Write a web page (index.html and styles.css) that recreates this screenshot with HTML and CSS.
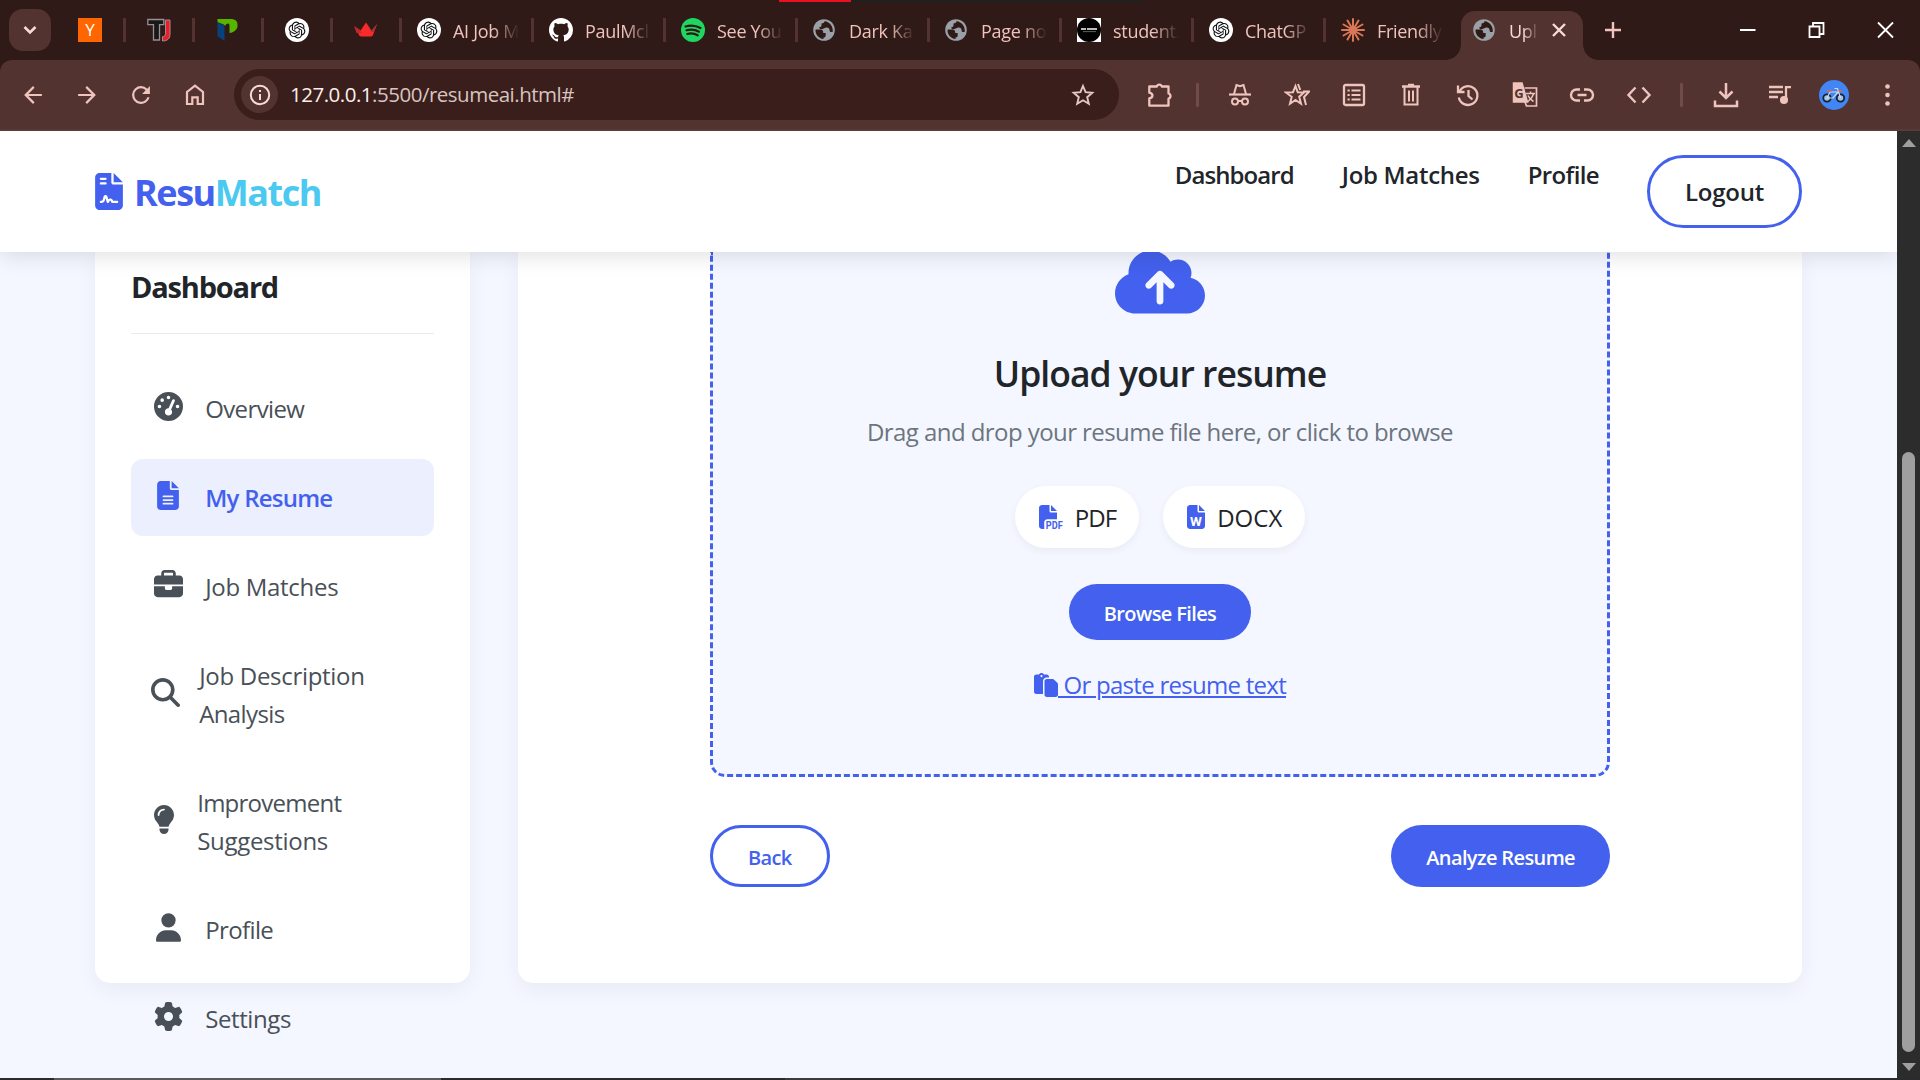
FILE: index.html
```html
<!DOCTYPE html>
<html lang="en">
<head>
<meta charset="utf-8">
<title>Upload Resume</title>
<link rel="stylesheet" href="styles.css">
</head>
<body>
<svg class="defs" width="0" height="0">
  <symbol id="i-openai" viewBox="0 0 24 24"><circle cx="12" cy="12" r="12" fill="#fff"/><path transform="translate(3.6 3.6) scale(.7)" fill="#111" d="M22.2819 9.8211a5.9847 5.9847 0 0 0-.5157-4.9108 6.0462 6.0462 0 0 0-6.5098-2.9A6.0651 6.0651 0 0 0 4.9807 4.1818a5.9847 5.9847 0 0 0-3.9977 2.9 6.0462 6.0462 0 0 0 .7427 7.0966 5.98 5.98 0 0 0 .511 4.9107 6.051 6.051 0 0 0 6.5146 2.9001A5.9847 5.9847 0 0 0 13.2599 24a6.0557 6.0557 0 0 0 5.7718-4.2058 5.9894 5.9894 0 0 0 3.9977-2.9001 6.0557 6.0557 0 0 0-.7475-7.0729zm-9.022 12.6081a4.4755 4.4755 0 0 1-2.8764-1.0408l.1419-.0804 4.7783-2.7582a.7948.7948 0 0 0 .3927-.6813v-6.7369l2.02 1.1686a.071.071 0 0 1 .038.052v5.5826a4.504 4.504 0 0 1-4.4945 4.4944zm-9.6607-4.1254a4.4708 4.4708 0 0 1-.5346-3.0137l.142.0852 4.783 2.7582a.7712.7712 0 0 0 .7806 0l5.8428-3.3685v2.3324a.0804.0804 0 0 1-.0332.0615L9.74 19.9502a4.4992 4.4992 0 0 1-6.1408-1.6464zM2.3408 7.8956a4.485 4.485 0 0 1 2.3655-1.9728V11.6a.7664.7664 0 0 0 .3879.6765l5.8144 3.3543-2.0201 1.1685a.0757.0757 0 0 1-.071 0l-4.8303-2.7865A4.504 4.504 0 0 1 2.3408 7.872zm16.5963 3.8558L13.1038 8.364 15.1192 7.2a.0757.0757 0 0 1 .071 0l4.8303 2.7913a4.4944 4.4944 0 0 1-.6765 8.1042v-5.6772a.79.79 0 0 0-.407-.667zm2.0107-3.0231l-.142-.0852-4.7735-2.7818a.7759.7759 0 0 0-.7854 0L9.409 9.2297V6.8974a.0662.0662 0 0 1 .0284-.0615l4.8303-2.7866a4.4992 4.4992 0 0 1 6.6802 4.66zM8.3065 12.863l-2.02-1.1638a.0804.0804 0 0 1-.038-.0567V6.0742a4.4992 4.4992 0 0 1 7.3757-3.4537l-.142.0805L8.704 5.459a.7948.7948 0 0 0-.3927.6813zm1.0976-2.3654l2.602-1.4998 2.6069 1.4998v2.9994l-2.5974 1.4997-2.6067-1.4997Z"/></symbol>
  <symbol id="i-globe" viewBox="0 0 24 24"><circle cx="11" cy="12" r="10.800" fill="#9aa0a6"/><g fill="#301a17"><path d="M2.600 11.500h4.800c1.700 0 2.800 1.100 2.800 2.700v.8h2.500v2.400c0 1.200-1 2-2.200 2.200v1.400C5.800 20.500 2 16.500 2.600 11.500z"/><path d="M11.500 3.200c-.2 1.900-1.500 2-3 2.300v1.800c0 1.400-.900 1.900-2.300 1.900.2 1.400 1 2 2.500 2 2.300 0 2.800-1.600 5-1.600 1.900 0 2.900 1.200 2.900 2.900 0 1.100.7 1.600 1.800 1.600h1.300c.9-5-2.700-10.600-8.200-10.900z"/></g></symbol>
</svg>

<div class="browser">
  <div class="tabstrip">
    <button class="tab-search"><svg width="42" height="42" viewBox="0 0 42 42"><path d="M15.500 18l5.500 5.500 5.500-5.500" fill="none" stroke="#f6dcd7" stroke-width="2.600"/></svg></button>
    <div class="tab pinned"><svg class="fav" viewBox="0 0 24 24"><rect width="24" height="24" fill="#f60"/><text x="12" y="18" text-anchor="middle" class="fav-y">Y</text></svg></div>
    <div class="tab pinned"><svg class="fav" viewBox="0 0 24 24"><path d="M.8 1.500h16v5.200h-4.300V22h-6V6.700H.8z" fill="#17181c" stroke="#98908f" stroke-width="1.300"/><path d="M18.500 2H23v14c0 4.500-2.500 7-7.500 7v-4.300c2 0 3-1 3-3z" fill="#ed1c2b" stroke="#98908f" stroke-width="1"/></svg></div>
    <div class="tab pinned"><svg class="fav" viewBox="0 0 24 24"><path d="M1.500 1h13c5 0 7.500 2.600 7 7-.4 4-3.500 6.500-8 7V7.500C13.500 5 11 4.500 9 8 7.500 5 4 6 1.500 4z" fill="#55b500"/><path d="M1.500 4.500C4 6 7 5.500 8.500 9v14L1.500 18z" fill="#06427e"/></svg></div>
    <div class="tab pinned"><svg class="fav"><use href="#i-openai"/></svg></div>
    <div class="tab pinned"><svg class="fav" viewBox="0 0 24 24"><path d="M1 9l5.500 3.500L12 4.500l5.500 8L23 6l-4 11c-.5 1-1 1.300-2 1.500H7c-1-.2-1.500-.5-2-1.500z" fill="#fb2a2a"/><path d="M12.500 5l5 7.500 5.500-6-2.500 6.500-3 1z" fill="#8e3636"/><path d="M0 8l5.500 3.500 2 3.500H2.500z" fill="#b92b2e"/></svg></div>
    <div class="tab"><svg class="fav"><use href="#i-openai"/></svg><span class="title">AI Job M</span></div>
    <div class="tab"><svg class="fav" viewBox="0 0 16 16"><path fill="#fff" d="M8 0C3.580 0 0 3.580 0 8c0 3.540 2.290 6.530 5.470 7.590.4.070.55-.17.55-.38 0-.19-.01-.82-.01-1.490-2.010.37-2.530-.49-2.690-.94-.09-.23-.48-.94-.82-1.130-.28-.15-.68-.52-.01-.53.63-.01 1.080.58 1.230.82.72 1.210 1.870.87 2.330.66.070-.52.28-.87.51-1.070-1.780-.2-3.640-.89-3.640-3.950 0-.87.31-1.590.82-2.150-.08-.2-.36-1.020.080-2.120 0 0 .67-.21 2.200.82.64-.18 1.320-.27 2-.27s1.360.090 2 .27c1.530-1.040 2.200-.82 2.200-.82.44 1.100.16 1.920.080 2.120.51.56.82 1.270.82 2.150 0 3.070-1.870 3.750-3.650 3.950.29.25.54.73.54 1.480 0 1.070-.01 1.930-.01 2.200 0 .21.15.46.55.38A8.010 8.010 0 0 0 16 8c0-4.420-3.580-8-8-8z"/></svg><span class="title">PaulMcl</span></div>
    <div class="tab"><svg class="fav" viewBox="0 0 24 24"><circle cx="12" cy="12" r="12" fill="#1ed760"/><path d="M4.500 8.500c5-1.500 10.500-1 15 1.500M5.500 12.300c4.200-1.200 8.800-.7 12.500 1.400M6.200 16c3.500-1 7.300-.6 10.500 1.300" fill="none" stroke="#301a17" stroke-width="2.200" stroke-linecap="round"/></svg><span class="title">See You</span></div>
    <div class="tab"><svg class="fav"><use href="#i-globe"/></svg><span class="title">Dark Ka</span></div>
    <div class="tab"><svg class="fav"><use href="#i-globe"/></svg><span class="title">Page no</span></div>
    <div class="tab"><svg class="fav" viewBox="0 0 24 24"><rect width="24" height="24" fill="#fff"/><circle cx="12" cy="12" r="12" fill="#000"/><path d="M4 11h5M10 11h10" stroke="#bbb" stroke-width="2"/><path d="M6 13.600h13" stroke="#777" stroke-width=".8"/></svg><span class="title">student.</span></div>
    <div class="tab"><svg class="fav"><use href="#i-openai"/></svg><span class="title">ChatGP</span></div>
    <div class="tab last"><svg class="fav" viewBox="-12 -12 24 24"><g stroke="#d97757" stroke-width="2" stroke-linecap="round"><path d="M0-11V11M-11 0H11M-5.500-9.500L5.500 9.500M-9.500-5.500L9.500 5.500M5.500-9.500L-5.500 9.500M9.500-5.500L-9.500 5.500"/></g></svg><span class="title">Friendly</span></div>
    <div class="tab active"><svg class="fav"><use href="#i-globe"/></svg><span class="title">Upl</span><svg class="x" width="14" height="14" viewBox="0 0 14 14"><path d="M1 1l12 12M13 1L1 13" stroke="#f6dcd7" stroke-width="2.400"/></svg></div>
    <svg class="new-tab" width="16" height="16" viewBox="0 0 16 16"><path d="M8 0v16M0 8h16" stroke="#efc4bc" stroke-width="2.400"/></svg>
    <div class="win">
      <svg width="17" height="18" viewBox="0 0 17 18"><path d="M1 9h15.500" stroke="#fff" stroke-width="2"/></svg>
      <svg width="17" height="18" viewBox="0 0 17 18"><path d="M1.500 5.500h10v10.500h-10zM5 5V2h10.500v11H12" fill="none" stroke="#fff" stroke-width="1.800"/></svg>
      <svg width="17" height="18" viewBox="0 0 17 18"><path d="M1 1.500l15 15M16 1.500l-15 15" stroke="#fff" stroke-width="1.800"/></svg>
    </div>
    <div class="top-mark"></div>
  </div>

  <div class="toolbar">
    <svg class="tb back" viewBox="3 3 18 18"><path d="M20 11H7.830l5.590-5.590L12 4l-8 8 8 8 1.410-1.410L7.830 13H20z"/></svg>
    <svg class="tb fwd" viewBox="3 3 18 18"><path d="M4 11h12.170l-5.590-5.590L12 4l8 8-8 8-1.410-1.410L16.170 13H4z"/></svg>
    <svg class="tb rel" viewBox="3 3 18 18"><path d="M17.650 6.350A7.960 7.960 0 0 0 12 4a8 8 0 1 0 7.730 10h-2.080A6 6 0 0 1 12 18c-3.310 0-6-2.690-6-6s2.690-6 6-6c1.660 0 3.140.69 4.220 1.780L13 11h7V4z"/></svg>
    <svg class="tb home" viewBox="0 0 20 22"><path d="M2 20V8l8-6.300L18 8v12h-5.300v-6.700H7.300V20z" fill="none" stroke="#efc4bc" stroke-width="2.200"/></svg>
    <div class="omnibox">
      <span class="info"><svg width="22" height="22" viewBox="0 0 22 22"><circle cx="11" cy="11" r="9.200" fill="none" stroke="#f6dcd7" stroke-width="2"/><path d="M11 10v6M11 6v2" stroke="#f6dcd7" stroke-width="2"/></svg></span>
      <span class="url"><b>127.0.0.1</b>:5500/resumeai.html#</span>
      <svg class="star" width="24" height="24" viewBox="0 0 24 24"><path d="M12 3l2.600 6.200 6.700.6-5.100 4.400 1.600 6.600-5.800-3.500-5.800 3.500 1.600-6.600-5.100-4.400 6.700-.6z" fill="none" stroke="#e3c8c3" stroke-width="1.900"/></svg>
    </div>
    <svg class="ext" width="26" height="26" viewBox="0 0 26 26"><path d="M2.300 4.500h7.500a2.600 2.600 0 0 1 5 0h6.700v7a2.700 2.700 0 0 1 0 5.200v7H2.300v-7.200c4.200-.8 4.200-5 0-5.800z" fill="none" stroke="#efc4bc" stroke-width="2.300" stroke-linejoin="round"/></svg>
    <i class="bar b1"></i>
    <div class="tools">
      <svg viewBox="0 0 26 26"><path d="M2 12.500h22" stroke-width="2.200"/><path d="M7 12L9.500 3l3.500 1.300L16.500 3 19 12"/><circle cx="8" cy="19.500" r="3"/><circle cx="18" cy="19.500" r="3"/><path d="M11 19h4"/></svg>
      <svg viewBox="0 0 26 26"><path d="M11.500 4l2.200 6.200 6.300.3-4.800 4.200 1.800 7-5.500-3.800L6 21.700l1.700-6.900L2 10.500l7-.3zM14 2l2.300 6M19 9.500h6l-5 5.500 2 8"/></svg>
      <svg viewBox="0 0 26 26"><rect x="3" y="3" width="20" height="20" rx="1.500" stroke-width="2.300"/><path d="M6.500 8.500h2.200M10.500 8.500h9M6.500 13h2.200M10.500 13h9M6.500 17.500h2.200M10.500 17.500h9" stroke-width="2"/></svg>
      <svg viewBox="0 0 26 26"><path d="M4 4.500h18M10 3h6" stroke-width="2.300"/><path d="M6.500 5v17.500h13V5M11 8.500v11M15 8.500v11" stroke-width="2"/></svg>
      <svg viewBox="0 0 26 26"><path d="M4.500 9.500a9.400 9.400 0 1 1-.7 6M3 3.500v6.500h6.500M13.500 8v6l4 3.500" stroke-width="2.300"/></svg>
      <svg viewBox="0 0 26 26"><path d="M12.500 6H24.500v18H14.500l-1.500-4" stroke-width="1.700"/><path d="M1.500 1h8.500L15.500 20H1.500z" fill="#efc4bc" stroke-width="1.500"/><text x="7" y="16" text-anchor="middle" class="g">G</text><path d="M14 11.500h9M18.500 9.500v2M21.500 12c-1 3.500-3 5.500-5.500 7.500M16 13.500c1 2.500 3 4.500 5.500 6" stroke-width="1.500"/></svg>
      <svg viewBox="0 0 26 26"><path d="M11 7.500H7.500a5.500 5.500 0 0 0 0 11H11M15 7.500h3.500a5.500 5.500 0 0 1 0 11H15M8.500 13h9" stroke-width="2.400"/></svg>
      <svg viewBox="0 0 26 26"><path d="M9.500 5.500L2.500 13l7 7.500M16.500 5.500l7 7.500-7 7.500" stroke-width="2.400"/></svg>
    </div>
    <i class="bar b2"></i>
    <svg class="dl" width="26" height="26" viewBox="0 0 26 26" fill="none" stroke="#efc4bc" stroke-width="2.500"><path d="M13 1v15M6.500 9.500L13 16l6.500-6.500M2 18.500V24h22v-5.500"/></svg>
    <svg class="mus" width="26" height="26" viewBox="0 0 26 26" fill="none" stroke="#efc4bc" stroke-width="2.300"><path d="M2 5h14M2 10h14M2 15h9M19 18V5.200h5"/><circle cx="17" cy="18" r="2.900" fill="#efc4bc"/></svg>
    <svg class="avatar" width="30" height="30" viewBox="0 0 30 30"><circle cx="15" cy="15" r="15" fill="#4285f4"/><g fill="none"><circle cx="8" cy="18" r="3.700" stroke="#16222c" stroke-width="1.800" fill="#9fc3e8"/><circle cx="21.500" cy="18" r="3.700" stroke="#16222c" stroke-width="1.800" fill="#9fc3e8"/><path d="M8 18l3-6h8l-5 6zM21.500 18L18.500 8.500h-3" stroke="#cfdbe6" stroke-width="1.200"/><path d="M8 10.800h4.500M19.500 10.800h3" stroke="#e8624a" stroke-width="1.800"/></g></svg>
    <svg class="dots" width="5" height="24" viewBox="0 0 5 24" fill="#efc4bc"><circle cx="2.500" cy="3.500" r="2.300"/><circle cx="2.500" cy="12" r="2.300"/><circle cx="2.500" cy="20.500" r="2.300"/></svg>
  </div>
</div>

<div class="viewport">
  <div class="page">
    <header class="site-header">
      <a class="logo"><svg width="28" height="37" viewBox="0 0 384 512"><path fill-rule="evenodd" d="M64 0C28.700 0 0 28.700 0 64V448c0 35.300 28.700 64 64 64H320c35.300 0 64-28.700 64-64V160H256c-17.700 0-32-14.300-32-32V0H64zM256 0V128H384L256 0zM80 64h64c8.800 0 16 7.200 16 16s-7.200 16-16 16H80c-8.800 0-16-7.200-16-16s7.200-16 16-16zm0 64h64c8.800 0 16 7.200 16 16s-7.200 16-16 16H80c-8.800 0-16-7.200-16-16s7.200-16 16-16zm54.200 253.800c-6.100 20.300-24.800 34.200-46 34.200H80c-8.800 0-16-7.200-16-16s7.200-16 16-16h8.200c7.100 0 13.300-4.600 15.300-11.400l14.900-49.500c3.400-11.300 13.800-19.100 25.600-19.100s22.200 7.700 25.600 19.100l11.600 38.600c7.400-6.200 16.800-9.700 26.800-9.700c15.900 0 30.400 9 37.500 23.200l4.400 8.800H304c8.800 0 16 7.200 16 16s-7.200 16-16 16H240c-6.100 0-11.600-3.400-14.300-8.800l-8.800-17.700c-1.700-3.400-5.100-5.500-8.800-5.500s-7.200 2.100-8.800 5.500l-8.800 17.700c-2.900 5.900-9.200 9.400-15.700 8.800s-12.100-5.100-13.900-11.300L144 349l-9.800 32.800z"/></svg><span class="brand">Resu<em>Match</em></span></a>
      <nav class="nav">
        <a class="t9">Dashboard</a><a class="t3">Job Matches</a><a class="t6">Profile</a><a class="logout t2">Logout</a>
      </nav>
    </header>

    <main class="container">
      <aside class="sidebar">
        <h3>Dashboard</h3>
        <ul class="menu">
          <li><i class="ic"><svg width="29" height="29" viewBox="0 0 512 512"><path fill-rule="evenodd" d="M0 256a256 256 0 1 1 512 0A256 256 0 1 1 0 256zM288 96a32 32 0 1 0 -64 0 32 32 0 1 0 64 0zM256 416c35.300 0 64-28.700 64-64c0-17.400-6.900-33.100-18.100-44.600L366 161.700c5.300-12.100-.2-26.300-12.300-31.600s-26.300 .2-31.600 12.300L257.900 288c-.6 0-1.300 0-1.900 0c-35.300 0-64 28.700-64 64s28.700 64 64 64zM176 144a32 32 0 1 0 -64 0 32 32 0 1 0 64 0zM96 288a32 32 0 1 0 0-64 32 32 0 1 0 0 64zm352-32a32 32 0 1 0 -64 0 32 32 0 1 0 64 0z"/></svg></i><span class="t6">Overview</span></li>
          <li class="on"><i class="ic"><svg width="22" height="29" viewBox="0 0 384 512"><path fill-rule="evenodd" d="M64 0C28.700 0 0 28.700 0 64V448c0 35.300 28.700 64 64 64H320c35.300 0 64-28.700 64-64V160H256c-17.700 0-32-14.300-32-32V0H64zM256 0V128H384L256 0zM112 256H272c8.800 0 16 7.200 16 16s-7.200 16-16 16H112c-8.800 0-16-7.200-16-16s7.200-16 16-16zm0 64H272c8.800 0 16 7.200 16 16s-7.200 16-16 16H112c-8.800 0-16-7.200-16-16s7.200-16 16-16zm0 64H272c8.800 0 16 7.200 16 16s-7.200 16-16 16H112c-8.800 0-16-7.200-16-16s7.200-16 16-16z"/></svg></i><span class="t8">My Resume</span></li>
          <li><i class="ic"><svg width="29" height="29" viewBox="0 0 512 512"><path fill-rule="evenodd" d="M184 48H328c4.400 0 8 3.600 8 8V96H176V56c0-4.400 3.600-8 8-8zm-56 8V96H64C28.700 96 0 124.700 0 160v96H192 320 512V160c0-35.300-28.700-64-64-64H384V56c0-30.900-25.100-56-56-56H184c-30.900 0-56 25.100-56 56zM512 288H320v32c0 17.700-14.300 32-32 32H224c-17.700 0-32-14.300-32-32V288H0V416c0 35.300 28.700 64 64 64H448c35.300 0 64-28.700 64-64V288z"/></svg></i><span class="t3">Job Matches</span></li>
          <li><i class="ic w30"><svg width="29" height="29" viewBox="0 0 512 512"><path fill-rule="evenodd" d="M416 208c0 45.900-14.900 88.300-40 122.700L502.600 457.400c12.500 12.500 12.500 32.800 0 45.300s-32.800 12.500-45.300 0L330.700 376c-34.400 25.200-76.800 40-122.700 40C93.100 416 0 322.900 0 208S93.100 0 208 0S416 93.100 416 208zM208 352a144 144 0 1 0 0-288 144 144 0 1 0 0 288z"/></svg></i><div><span class="t3">Job Description</span><br><span class="t6">Analysis</span></div></li>
          <li><i class="ic w28"><svg width="22" height="29" viewBox="0 0 384 512"><path fill-rule="evenodd" d="M272 384c9.600-31.900 29.500-59.100 49.200-86.200c5.200-7.100 10.400-14.200 15.400-21.400c19.800-28.500 31.400-63 31.400-100.300C368 78.800 289.200 0 192 0S16 78.800 16 176c0 37.300 11.600 71.900 31.400 100.300c5 7.200 10.200 14.300 15.400 21.400c19.800 27.100 39.700 54.400 49.200 86.200H272zM192 512c44.200 0 80-35.800 80-80V416H112v16c0 44.200 35.800 80 80 80zM112 176c0 8.800-7.200 16-16 16s-16-7.200-16-16c0-61.900 50.100-112 112-112c8.800 0 16 7.200 16 16s-7.200 16-16 16c-44.200 0-80 35.800-80 80z"/></svg></i><div><span class="t8">Improvement</span><br><span class="t3">Suggestions</span></div></li>
          <li><i class="ic"><svg width="25" height="29" viewBox="0 0 448 512"><path d="M224 256A128 128 0 1 0 224 0a128 128 0 1 0 0 256zm-45.700 48C79.800 304 0 383.800 0 482.300C0 498.700 13.300 512 29.700 512H418.300c16.400 0 29.700-13.300 29.700-29.700C448 383.800 368.200 304 269.700 304H178.300z"/></svg></i><span class="t6">Profile</span></li>
          <li><i class="ic"><svg width="29" height="29" viewBox="0 0 512 512"><path fill-rule="evenodd" d="M495.900 166.600c3.200 8.700 .5 18.400-6.400 24.600l-43.300 39.400c1.100 8.300 1.700 16.800 1.700 25.400s-.6 17.100-1.700 25.400l43.300 39.400c6.900 6.200 9.600 15.900 6.400 24.600c-4.400 11.900-9.700 23.300-15.800 34.300l-4.700 8.100c-6.600 11-14 21.400-22.100 31.200c-5.900 7.200-15.700 9.600-24.500 6.800l-55.700-17.700c-13.400 10.300-28.200 18.900-44 25.400l-12.500 57.100c-2 9.100-9 16.300-18.200 17.800c-13.800 2.300-28 3.500-42.500 3.500s-28.700-1.200-42.500-3.500c-9.200-1.500-16.200-8.700-18.200-17.800l-12.500-57.100c-15.800-6.500-30.600-15.100-44-25.400L83.100 425.900c-8.800 2.800-18.600 .3-24.500-6.800c-8.100-9.800-15.500-20.200-22.100-31.200l-4.700-8.100c-6.100-11-11.400-22.400-15.800-34.300c-3.200-8.700-.5-18.400 6.400-24.600l43.300-39.400C64.600 273.100 64 264.600 64 256s.6-17.100 1.700-25.400L22.400 191.200c-6.900-6.200-9.600-15.900-6.400-24.600c4.400-11.900 9.700-23.300 15.800-34.300l4.700-8.100c6.600-11 14-21.400 22.100-31.200c5.900-7.200 15.700-9.600 24.500-6.800l55.700 17.700c13.400-10.300 28.200-18.900 44-25.400l12.500-57.100c2-9.100 9-16.300 18.200-17.800C227.300 1.200 241.500 0 256 0s28.700 1.200 42.500 3.500c9.200 1.500 16.200 8.700 18.200 17.800l12.500 57.100c15.800 6.500 30.600 15.100 44 25.400l55.700-17.700c8.800-2.800 18.600-.3 24.500 6.800c8.100 9.800 15.500 20.200 22.100 31.200l4.700 8.100c6.100 11 11.400 22.400 15.800 34.300zM256 336a80 80 0 1 0 0-160 80 80 0 1 0 0 160z"/></svg></i><span class="t4">Settings</span></li>
        </ul>
      </aside>

      <section class="content">
        <div class="upload">
          <svg class="cloud" width="90" height="72" viewBox="0 0 640 512"><path fill-rule="evenodd" d="M144 480C64.500 480 0 415.500 0 336c0-62.800 40.200-116.200 96.200-135.900c-.1-2.700-.2-5.400-.2-8.100c0-88.400 71.600-160 160-160c59.300 0 111 32.200 138.700 80.200C409.900 102 428.300 96 448 96c53 0 96 43 96 96c0 12.200-2.300 23.800-6.400 34.600C596 238.400 640 290.100 640 352c0 70.700-57.300 128-128 128H144zm79-217c-9.400 9.400-9.400 24.600 0 33.900s24.600 9.400 33.900 0l39-39V392c0 13.300 10.700 24 24 24s24-10.700 24-24V257.900l39 39c9.400 9.400 24.600 9.400 33.900 0s9.400-24.600 0-33.900l-80-80c-9.400-9.400-24.600-9.400-33.900 0l-80 80z"/></svg>
          <h2>Upload your resume</h2>
          <p>Drag and drop your resume file here, or click to browse</p>
          <div class="types">
            <div class="type"><svg width="24" height="24" viewBox="0 0 512 512"><path d="M0 64C0 28.700 28.700 0 64 0H224V128c0 17.700 14.300 32 32 32H384V304H176c-35.300 0-64 28.700-64 64V512H64c-35.300 0-64-28.700-64-64V64zm384 64H256V0L384 128z"/><text x="146" y="510" class="pdf" textLength="360" lengthAdjust="spacingAndGlyphs">PDF</text></svg><span class="t9">PDF</span></div>
            <div class="type"><svg width="18" height="24" viewBox="0 0 384 512"><path d="M64 0C28.700 0 0 28.700 0 64V448c0 35.300 28.700 64 64 64H320c35.300 0 64-28.700 64-64V160H256c-17.700 0-32-14.300-32-32V0H64zM256 0V128H384L256 0z"/><text x="192" y="446" text-anchor="middle" class="w">W</text></svg><span>DOCX</span></div>
          </div>
          <button class="btn browse">Browse Files</button>
          <a class="paste"><svg width="24" height="24" viewBox="0 0 512 512"><path fill-rule="evenodd" d="M160 0c-23.700 0-44.400 12.900-55.400 32H48C21.500 32 0 53.500 0 80V400c0 26.500 21.500 48 48 48H192V176c0-44.200 35.800-80 80-80h48V80c0-26.500-21.500-48-48-48H215.400C204.400 12.900 183.700 0 160 0zM272 128c-26.500 0-48 21.500-48 48V448v16c0 26.500 21.500 48 48 48H464c26.500 0 48-21.500 48-48V243.900c0-12.700-5.100-24.900-14.100-33.900l-67.900-67.900c-9-9-21.200-14.100-33.900-14.100H320 272zM160 40a24 24 0 1 1 0 48 24 24 0 1 1 0-48z"/></svg><span>&nbsp;Or paste resume text</span></a>
        </div>
        <div class="actions">
          <button class="btn outline">Back</button>
          <button class="btn solid">Analyze Resume</button>
        </div>
      </section>
    </main>
  </div>
  <div class="scrollbar"><i class="up"></i><i class="thumb"></i><i class="down"></i></div>
</div>
<div class="taskbar"><i class="t-left"></i><i class="t-mid"></i></div>
</body>
</html>
```
FILE: styles.css
```css
* { box-sizing: border-box; }
body {
  margin: 0;
  width: 1920px;
  height: 1080px;
  overflow: hidden;
  display: flex;
  flex-direction: column;
  font-family: "Open Sans", "Noto Sans", sans-serif;
  background: #f4f7ff;
}
svg { display: block; flex: none; }
.defs { position: absolute; }
button { font: inherit; border: 0; padding: 0; margin: 0; }

/* letter tracking */
.t2 { letter-spacing: -.23px; }
.t3 { letter-spacing: -.3px; }
.t4 { letter-spacing: -.4px; }
.t6 { letter-spacing: -.62px; }
.t8 { letter-spacing: -.75px; }
.t9 { letter-spacing: -.92px; }

/* browser chrome */
.browser { height: 131px; flex: none; background: #301a17; }
.tabstrip {
  height: 60px;
  background: #301a17;
  display: flex;
  align-items: center;
  position: relative;
  padding-left: 9px;
}
.tab-search { width: 42px; height: 42px; border-radius: 14px; background: #523330; margin-right: 6px; }
.tab {
  width: 132px;
  height: 24px;
  padding-left: 15px;
  border-right: 3px solid #523330;
  display: flex;
  align-items: center;
  flex: none;
}
.tab.pinned { width: 69px; padding-left: 21px; }
.tab.last { border-color: transparent; }
.fav { width: 24px; height: 24px; }
.title {
  margin: 1px 0 0 12px;
  width: 76px;
  flex: none;
  white-space: nowrap;
  font-size: 18px;
  line-height: 26px;
  letter-spacing: -.3px;
  color: #efc4bc;
  -webkit-mask-image: linear-gradient(90deg, #000 40px, transparent 66px);
  mask-image: linear-gradient(90deg, #000 40px, transparent 66px);
}
.tab.active {
  position: relative;
  align-self: flex-end;
  width: 122px;
  height: 49px;
  margin-left: 3px;
  border: 0;
  border-radius: 14px 14px 0 0;
  background: #523330;
  padding: 0 0 11px 12px;
}
.tab.active::before, .tab.active::after {
  content: "";
  position: absolute;
  bottom: 0;
  width: 15px;
  height: 15px;
}
.tab.active::before { left: -15px; background: radial-gradient(circle at 0 0, transparent 14.500px, #523330 15px); }
.tab.active::after { right: -15px; background: radial-gradient(circle at 100% 0, transparent 14.500px, #523330 15px); }
.tab.active .title {
  width: 34px;
  color: #f6dcd7;
  -webkit-mask-image: linear-gradient(90deg, #000 14px, transparent 30px);
  mask-image: linear-gradient(90deg, #000 14px, transparent 30px);
}
.x { margin-left: 9px; }
.new-tab { margin-left: 22px; }
.win { margin-left: auto; margin-right: 26px; display: flex; gap: 52px; }
.top-mark { position: absolute; left: 779px; top: 0; width: 362px; height: 2px; background: linear-gradient(90deg, #e81123 72px, #202022 72px); }
.fav-y { font: 17px "Open Sans", sans-serif; fill: #fff; }

.toolbar {
  height: 71px;
  background: #523330;
  border-bottom: 2px solid #5a3b37;
  border-radius: 12px 12px 0 0;
  display: flex;
  align-items: center;
  padding-left: 23px;
}
.tb { width: 20px; height: 20px; fill: #efc4bc; }
.back, .fwd, .rel { margin-right: 34px; }
.home { height: 22px; }
.omnibox {
  margin-left: 29px;
  width: 885px;
  height: 51px;
  border-radius: 26px;
  background: #3a1e1b;
  display: flex;
  align-items: center;
  padding: 0 24px 0 7px;
}
.info { width: 37px; height: 37px; border-radius: 50%; background: #523330; display: flex; align-items: center; justify-content: center; }
.url { margin: -1px 0 0 12px; font-size: 20.500px; letter-spacing: -.49px; color: #d9c4c0; white-space: nowrap; }
.url b { font-weight: 400; color: #fbeeeb; }
.star { margin-left: auto; }
.ext { margin-left: 28px; }
.bar { width: 3px; height: 24px; background: #6f4c47; border-radius: 1px; }
.b1 { margin-left: 23px; }
.tools { display: flex; margin-left: 28px; gap: 31px; fill: none; stroke: #efc4bc; stroke-width: 2; }
.tools svg { width: 26px; height: 26px; }
.g { font: bold 13px "Open Sans", sans-serif; fill: #523330; stroke: none; }
.b2 { margin-left: 28px; }
.dl { margin-left: 30px; }
.mus { margin-left: 28px; }
.avatar { margin-left: 26px; }
.dots { margin-left: 36px; }

/* page */
.viewport { flex: 1; display: flex; min-height: 0; overflow: hidden; }
.page { width: 1897px; height: 947px; overflow: hidden; background: #f4f7ff; color: #212529; font-size: 24px; line-height: 38.400px; }
.site-header {
  height: 121px;
  padding: 0 95px;
  background: #fff;
  box-shadow: 0 3px 22px rgba(0, 0, 0, .13);
  position: relative;
  z-index: 2;
  display: flex;
  justify-content: space-between;
  align-items: center;
}
.logo { display: flex; align-items: center; gap: 11px; fill: #4361ee; color: #4361ee; font-size: 36px; font-weight: 700; letter-spacing: -1.450px; }
.brand { padding-top: 4px; }
.brand em { font-style: normal; color: #4cc9f0; }
.nav { display: flex; gap: 48px; font-weight: 600; height: 73px; }
.nav a { white-space: nowrap; padding-top: 1px; }
.nav .logout { border: 3px solid #4361ee; border-radius: 37px; padding: 15px 35px; }

.container { display: flex; gap: 48px; padding: 0 95px; height: 731px; }
.sidebar, .content {
  background: #fff;
  border-radius: 0 0 15px 15px;
  box-shadow: 0 7px 22px rgba(0, 0, 0, .05);
}
.sidebar { width: 375px; padding: 0 36px; flex: none; }
.sidebar h3 { margin: 0 0 36px; height: 82px; padding-top: 15px; border-bottom: 1px solid #e9ecef; font-size: 29px; line-height: 40px; font-weight: 700; letter-spacing: -1.200px; }
.menu { list-style: none; margin: 0; padding: 0; color: #495057; fill: #495057; display: flex; flex-direction: column; gap: 12px; }
.menu li { display: flex; align-items: center; padding: 19.200px; border-radius: 12px; }
.menu .on { background: #eceffd; color: #4361ee; fill: #4361ee; font-weight: 600; }
.menu li > span, .menu li > div { padding-top: 1px; margin-bottom: -1px; }
.ic { width: 36px; margin: 0 19px 3px 0; display: flex; justify-content: center; flex: none; }
.w30 { width: 30px; }
.w28 { width: 28px; }

.content { flex: 1; display: flex; flex-direction: column; align-items: center; }
.upload {
  width: 900px;
  height: 525px;
  flex: none;
  border: 3px dashed #4361ee;
  border-top: 0;
  border-radius: 0 0 15px 15px;
  background: #f4f7ff;
  display: flex;
  flex-direction: column;
  align-items: center;
  overflow: hidden;
}
.cloud { fill: #4361ee; margin-top: -6px; }
.upload h2 { margin: 33px 0 0; font-size: 35.500px; line-height: 44px; font-weight: 600; letter-spacing: -.95px; }
.upload p { margin: 18px 0 0; color: #6c757d; letter-spacing: -.567px; }
.types { display: flex; gap: 24px; margin-top: 35px; }
.type { height: 62px; border-radius: 31px; padding: 0 23px 0 24px; background: #fff; box-shadow: 0 3px 8px rgba(0, 0, 0, .05); display: flex; align-items: center; gap: 12px; fill: #4361ee; }
.type span { padding-top: 2px; }
.pdf { font: bold 215px "Roboto", sans-serif; }
.w { font: bold 290px "Roboto", sans-serif; fill: #fff; }
.btn { border-radius: 31px; font-size: 20px; line-height: 27px; font-weight: 600; letter-spacing: -.62px; height: 62px; padding: 2px 35px 0; white-space: nowrap; }
.browse { height: 56px; margin-top: 36px; background: #4361ee; color: #fff; }
.paste { display: flex; align-items: center; margin-top: 25px; color: #4361ee; fill: #4361ee; text-decoration: underline; letter-spacing: -.72px; }
.paste span { padding-top: 1px; }
.actions { width: 900px; display: flex; justify-content: space-between; margin-top: 48px; }
.outline { background: #fff; border: 3px solid #4361ee; color: #4361ee; }
.solid { background: #4361ee; color: #fff; }

.scrollbar { width: 23px; background: #2c2c2c; display: flex; flex-direction: column; align-items: center; }
.up { margin-top: 8px; border: 7px solid transparent; border-top: 0; border-bottom: 8px solid #9f9f9f; }
.thumb { width: 13px; height: 600px; border-radius: 7px; background: #9f9f9f; margin-top: 305px; }
.down { margin-top: 11px; border: 7px solid transparent; border-bottom: 0; border-top: 8px solid #9f9f9f; }
.taskbar { height: 2px; flex: none; background: #2b2b2e; display: flex; }
.t-left { margin-left: 54px; width: 387px; background: #5a5a5c; }
.t-mid { margin-left: 344px; width: 55px; background: #3b3b3e; }
```
